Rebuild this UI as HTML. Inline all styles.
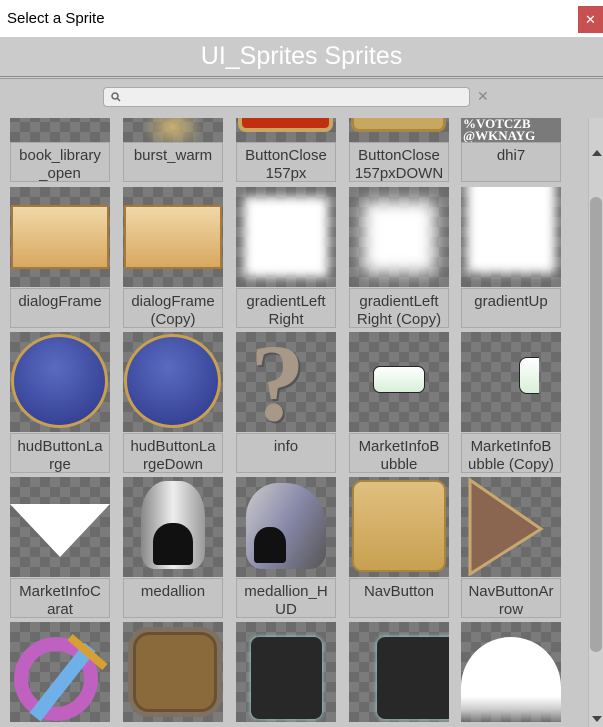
<!DOCTYPE html>
<html><head><meta charset="utf-8"><style>
*{margin:0;padding:0;box-sizing:border-box}
body{width:603px;height:727px;overflow:hidden;background:#c8c8c8;font-family:"Liberation Sans",sans-serif;position:relative}
.tb{position:absolute;left:0;top:0;width:603px;height:37px;background:#fff}
.tb span{position:absolute;left:7px;top:10px;font-size:15px;color:#000}
.cl{position:absolute;left:578px;top:6px;width:25px;height:27px;background:#c75050;color:#fff;font-size:13px;text-align:center;line-height:27px}
.hd{position:absolute;left:0;top:37px;width:603px;height:39px;background:#cbcbcb;color:#fff;font-size:25px;text-align:center;line-height:38px}
.ln{position:absolute;left:0;top:76px;width:603px;height:3px;border-top:1px solid #888;border-bottom:1px solid #999;background:#d2d2d2}
.sr{position:absolute;left:103px;top:87px;width:367px;height:20px;background:#efefef;border:1px solid #aaa;border-radius:4px}
.sx{position:absolute;left:477px;top:88px;font-size:14px;color:#888}
.grid{position:absolute;left:0;top:118px;width:588px;height:609px;overflow:hidden}
.c{position:absolute;width:100px;height:100px;background-color:#7b7b7b;background-image:linear-gradient(45deg,#6b6b6b 25%,transparent 25%,transparent 75%,#6b6b6b 75%),linear-gradient(45deg,#6b6b6b 25%,transparent 25%,transparent 75%,#6b6b6b 75%);background-size:20px 20px;background-position:0 0,10px 10px;overflow:hidden}
.l{position:absolute;width:100px;height:40px;background:#c4c4c4;border:1px solid #a9a9a9;font-size:15px;color:#383838;text-align:center;line-height:18px;padding-top:4px}
.sb{position:absolute;left:588px;top:118px;width:15px;height:609px;background:#cfcfcf;border-left:1px solid #bbb}
.th{position:absolute;left:590px;top:197px;width:12px;height:455px;background:#a6a6a6;border-radius:6px}
.g{position:absolute;background:#fff;filter:blur(5px)}
</style></head><body>
<div class="tb"><span>Select a Sprite</span><div class="cl">✕</div></div>
<div class="hd">UI_Sprites Sprites</div>
<div class="ln"></div>
<div class="sr"><svg width="12" height="12" style="position:absolute;left:6px;top:3px"><circle cx="5" cy="5" r="3" fill="none" stroke="#666" stroke-width="1.5"/><line x1="7" y1="7" x2="10" y2="10" stroke="#666" stroke-width="1.5"/></svg></div>
<div class="sx">✕</div>
<div class="grid">
<div class="c" style="left:10px;top:-76px"></div>
<div class="c" style="left:123px;top:-76px"><div style="position:absolute;left:20px;top:60px;width:60px;height:50px;background:radial-gradient(#c8b070,transparent 70%)"></div></div>
<div class="c" style="left:236px;top:-76px"><div style="position:absolute;left:2px;top:40px;width:95px;height:50px;background:#c03010;border:4px solid #c8a860;border-radius:8px"></div></div>
<div class="c" style="left:349px;top:-76px"><div style="position:absolute;left:2px;top:40px;width:95px;height:50px;background:#c8a860;border:3px solid #a88840;border-radius:8px"></div></div>
<div class="c" style="left:461px;top:-76px;background:#7a7a7a"><div style="position:absolute;left:2px;top:76px;font:bold 13px 'Liberation Serif',serif;color:#fff;line-height:12px">%VOTCZB<br>@WKNAYG</div></div>
<div class="l" style="left:10px;top:24px">book_library<br>_open</div>
<div class="l" style="left:123px;top:24px">burst_warm</div>
<div class="l" style="left:236px;top:24px">ButtonClose<br>157px</div>
<div class="l" style="left:349px;top:24px">ButtonClose<br>157pxDOWN</div>
<div class="l" style="left:461px;top:24px">dhi7</div>
<div class="c" style="left:10px;top:69px"><div style="position:absolute;left:1px;top:18px;width:98px;height:64px;background:linear-gradient(#f0d8a8,#d8a860);border:2px solid #a87838"></div></div>
<div class="c" style="left:123px;top:69px"><div style="position:absolute;left:1px;top:18px;width:98px;height:64px;background:linear-gradient(#f0d8a8,#d8a860);border:2px solid #a87838"></div></div>
<div class="c" style="left:236px;top:69px"><div class="g" style="left:8px;top:10px;width:84px;height:80px"></div></div>
<div class="c" style="left:349px;top:69px"><div class="g" style="left:14px;top:14px;width:72px;height:72px;filter:blur(8px)"></div></div>
<div class="c" style="left:461px;top:69px"><div class="g" style="left:6px;top:-10px;width:88px;height:96px"></div></div>
<div class="l" style="left:10px;top:170px">dialogFrame</div>
<div class="l" style="left:123px;top:170px">dialogFrame<br>(Copy)</div>
<div class="l" style="left:236px;top:170px">gradientLeft<br>Right</div>
<div class="l" style="left:349px;top:170px">gradientLeft<br>Right (Copy)</div>
<div class="l" style="left:461px;top:170px">gradientUp</div>
<div class="c" style="left:10px;top:214px"><div style="position:absolute;left:1px;top:2px;width:97px;height:94px;border-radius:50%;background:radial-gradient(circle at 45% 35%,#5a6cc0,#2a3488);border:3px solid #c8a050"></div></div>
<div class="c" style="left:123px;top:214px"><div style="position:absolute;left:1px;top:2px;width:97px;height:94px;border-radius:50%;background:radial-gradient(circle at 45% 35%,#5a6cc0,#2a3488);border:3px solid #c8a050"></div></div>
<div class="c" style="left:236px;top:214px"><div style="position:absolute;left:14px;top:-12px;font:bold 110px 'Liberation Serif',serif;color:#a89888;text-shadow:2px 2px 0 #555">?</div></div>
<div class="c" style="left:349px;top:214px"><div style="position:absolute;left:24px;top:34px;width:52px;height:27px;background:linear-gradient(#fff,#d8f0d8);border-radius:7px;border:1px solid #222"></div></div>
<div class="c" style="left:461px;top:214px"><div style="position:absolute;left:58px;top:25px;width:20px;height:37px;background:linear-gradient(#fff,#d8f0d8);border-radius:8px 0 0 8px;border:1px solid #222;border-right:none"></div></div>
<div class="l" style="left:10px;top:315px">hudButtonLa<br>rge</div>
<div class="l" style="left:123px;top:315px">hudButtonLa<br>rgeDown</div>
<div class="l" style="left:236px;top:315px">info</div>
<div class="l" style="left:349px;top:315px">MarketInfoB<br>ubble</div>
<div class="l" style="left:461px;top:315px">MarketInfoB<br>ubble (Copy)</div>
<div class="c" style="left:10px;top:359px"><svg width="100" height="100"><polygon points="0,27 100,27 50,80" fill="#fff"/></svg></div>
<div class="c" style="left:123px;top:359px"><div style="position:absolute;left:18px;top:4px;width:64px;height:88px;border-radius:40% 40% 20% 20%;background:linear-gradient(90deg,#888,#eee,#999)"></div><div style="position:absolute;left:30px;top:46px;width:40px;height:42px;border-radius:45% 45% 10% 10%;background:#111"></div></div>
<div class="c" style="left:236px;top:359px"><div style="position:absolute;left:10px;top:6px;width:80px;height:86px;border-radius:40% 50% 20% 20%;background:linear-gradient(120deg,#ccc,#8888aa,#555)"></div><div style="position:absolute;left:18px;top:50px;width:32px;height:36px;border-radius:45% 45% 10% 10%;background:#111"></div></div>
<div class="c" style="left:349px;top:359px"><div style="position:absolute;left:3px;top:3px;width:94px;height:92px;border-radius:10px;background:linear-gradient(#e0c080,#c8a050);border:2px solid #a8843c"></div></div>
<div class="c" style="left:461px;top:359px"><svg width="100" height="100"><polygon points="9,3 80,52 9,97" fill="#8a6650" stroke="#c8a870" stroke-width="3"/></svg></div>
<div class="l" style="left:10px;top:460px">MarketInfoC<br>arat</div>
<div class="l" style="left:123px;top:460px">medallion</div>
<div class="l" style="left:236px;top:460px">medallion_H<br>UD</div>
<div class="l" style="left:349px;top:460px">NavButton</div>
<div class="l" style="left:461px;top:460px">NavButtonAr<br>row</div>
<div class="c" style="left:10px;top:504px"><div style="position:absolute;left:4px;top:15px;width:84px;height:84px;border-radius:50%;border:14px solid #c060c0"></div><svg width="100" height="100" style="position:absolute;left:0;top:0"><line x1="25" y1="95" x2="80" y2="25" stroke="#70b0e8" stroke-width="14"/><line x1="60" y1="15" x2="95" y2="45" stroke="#d8a030" stroke-width="8"/></svg></div>
<div class="c" style="left:123px;top:504px"><div style="position:absolute;left:10px;top:10px;width:84px;height:80px;border-radius:16px;background:#8a6a3a;border:3px solid #6a5030;box-shadow:0 0 0 5px #807060"></div></div>
<div class="c" style="left:236px;top:504px"><div style="position:absolute;left:15px;top:15px;width:71px;height:82px;border-radius:8px;background:#282828;box-shadow:0 0 5px #a0e0e0"></div></div>
<div class="c" style="left:349px;top:504px"><div style="position:absolute;left:28px;top:15px;width:80px;height:82px;border-radius:8px;background:#282828;box-shadow:0 0 5px #a0e0e0"></div></div>
<div class="c" style="left:461px;top:504px"><div style="position:absolute;left:0;top:15px;width:100px;height:85px;border-radius:50px 50px 0 0;background:linear-gradient(#fff 70%,#ccc 85%,transparent)"></div></div>
</div>
<div class="sb"><div style="position:absolute;left:3px;top:32px;width:0;height:0;border-left:5px solid transparent;border-right:5px solid transparent;border-bottom:6px solid #444"></div><div style="position:absolute;left:3px;top:598px;width:0;height:0;border-left:5px solid transparent;border-right:5px solid transparent;border-top:6px solid #444"></div></div>
<div class="th"></div>
</body></html>
